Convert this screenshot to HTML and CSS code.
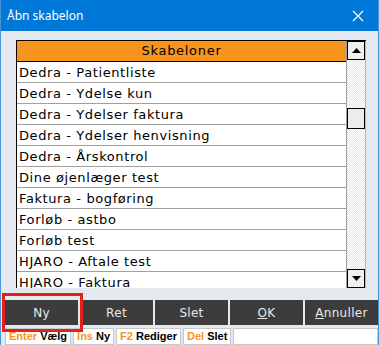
FILE: index.html
```html
<!DOCTYPE html>
<html lang="da">
  <head>
    <meta charset="UTF-8" />
    <meta name="viewport" content="width=device-width, initial-scale=1.0" />
    <title>Åbn skabelon</title>
    <link rel="stylesheet" href="styles.css">
  </head>
  <body>
    <div class="window">
      <div class="titlebar">
        <span class="title">Åbn skabelon</span>
        <svg class="close" width="12" height="12" viewBox="0 0 12 12">
          <path d="M1 1 L11 11 M11 1 L1 11" stroke="#fff" stroke-width="1.2" fill="none" />
        </svg>
      </div>

      <div class="content">
        <div class="list">
          <div class="rows">
            <div class="header">Skabeloner</div>
            <div class="row">Dedra - Patientliste</div>
            <div class="row">Dedra - Ydelse kun</div>
            <div class="row">Dedra - Ydelser faktura</div>
            <div class="row">Dedra - Ydelser henvisning</div>
            <div class="row">Dedra - Årskontrol</div>
            <div class="row">Dine øjenlæger test</div>
            <div class="row">Faktura - bogføring</div>
            <div class="row">Forløb - astbo</div>
            <div class="row">Forløb test</div>
            <div class="row">HJARO - Aftale test</div>
            <div class="row">HJARO - Faktura</div>
          </div>
          <div class="scrollbar">
            <div class="sb-btn">
              <svg width="9" height="5" viewBox="0 0 9 5"><path d="M0 5 L4.5 0 L9 5 Z" fill="#000" /></svg>
            </div>
            <div class="sb-track">
              <div class="sb-thumb"></div>
            </div>
            <div class="sb-btn">
              <svg width="9" height="5" viewBox="0 0 9 5"><path d="M0 0 L9 0 L4.5 5 Z" fill="#000" /></svg>
            </div>
          </div>
        </div>
      </div>

      <div class="buttons">
        <button class="btn">Ny</button>
        <button class="btn">Ret</button>
        <button class="btn">Slet</button>
        <button class="btn"><u>O</u>K</button>
        <button class="btn"><u>A</u>nnuller</button>
        <div class="highlight"></div>
      </div>

      <div class="status">
        <span class="key"><b class="k">Enter</b> Vælg</span>
        <span class="key"><b class="k">Ins</b> Ny</span>
        <span class="key"><b class="k">F2</b> Rediger</span>
        <span class="key"><b class="k">Del</b> Slet</span>
        <span class="key fill"></span>
      </div>
    </div>
  </body>
</html>
```

FILE: styles.css
```css
body {
  margin: 0;
  font-family: "DejaVu Sans", Verdana, sans-serif;
}
.window {
  width: 379px;
  height: 345px;
  box-sizing: border-box;
  background: #e4e9ef;
  border-left: 1px solid #4a95d8;
  border-right: 1px solid #4a95d8;
  display: flex;
  flex-direction: column;
  overflow: hidden;
}
.titlebar {
  height: 31px;
  flex-shrink: 0;
  background: #0078d7;
  margin: 0 -1px;
  display: flex;
  align-items: center;
  justify-content: space-between;
  padding: 0 15px 0 7px;
}
.title {
  font-family: "Noto Sans", "Open Sans", sans-serif;
  font-size: 12px;
  color: #fff;
}
.content {
  padding: 9px 0 0 15px;
}
.list {
  display: flex;
  width: 350px;
  height: 248px;
  border-top: 1px solid #000;
  border-left: 1px solid #000;
  box-sizing: border-box;
}
.rows {
  flex: 1;
  overflow: hidden;
  background: #fff;
  border-right: 1px solid #a0a0a0;
}
.header {
  height: 20px;
  background: #f7941d;
  border-bottom: 1px solid #000;
  text-align: center;
  font-size: 13px;
  letter-spacing: 0.7px;
  line-height: 20px;
  color: #000;
}
.row {
  height: 20px;
  border-bottom: 1px solid #a0a0a0;
  font-size: 13px;
  letter-spacing: 0.6px;
  line-height: 21px;
  padding-left: 2px;
  color: #000;
  white-space: nowrap;
}
.scrollbar {
  width: 18px;
  display: flex;
  flex-direction: column;
  border-right: 1px solid #b8b8b8;
  background: repeating-conic-gradient(#e6e6e6 0 25%, #ffffff 0 50%) 0 0 / 2px 2px;
}
.sb-btn {
  height: 17px;
  flex-shrink: 0;
  border: 1px solid #000;
  background: #f0f0f0;
  display: flex;
  align-items: center;
  justify-content: center;
}
.sb-track {
  flex: 1;
  padding-top: 48px;
}
.sb-thumb {
  height: 19px;
  border: 1px solid #000;
  background: #ececec;
}
.buttons {
  position: relative;
  display: flex;
  gap: 2px;
  padding: 12px 0 0 4px;
}
.btn {
  flex: 1;
  height: 25px;
  background: #3c3c3c;
  border: none;
  color: #e8e8e8;
  font-family: "DejaVu Sans", Verdana, sans-serif;
  font-size: 12px;
  letter-spacing: 0.3px;
  padding: 0;
}
.highlight {
  position: absolute;
  left: 1px;
  top: 5px;
  width: 75px;
  height: 33px;
  border: 3px solid #e3201b;
}
.status {
  display: flex;
  gap: 2px;
  padding: 3px 0 0 4px;
}
.key {
  background: #fff;
  border: 1px solid #c8c8c8;
  font-family: "Liberation Sans", Arial, sans-serif;
  font-size: 11px;
  font-weight: bold;
  line-height: 15px;
  padding: 0 3px;
  color: #000;
  white-space: nowrap;
}
.k {
  color: #f7941d;
}
.fill {
  flex: 1;
  height: 15px;
}
```
